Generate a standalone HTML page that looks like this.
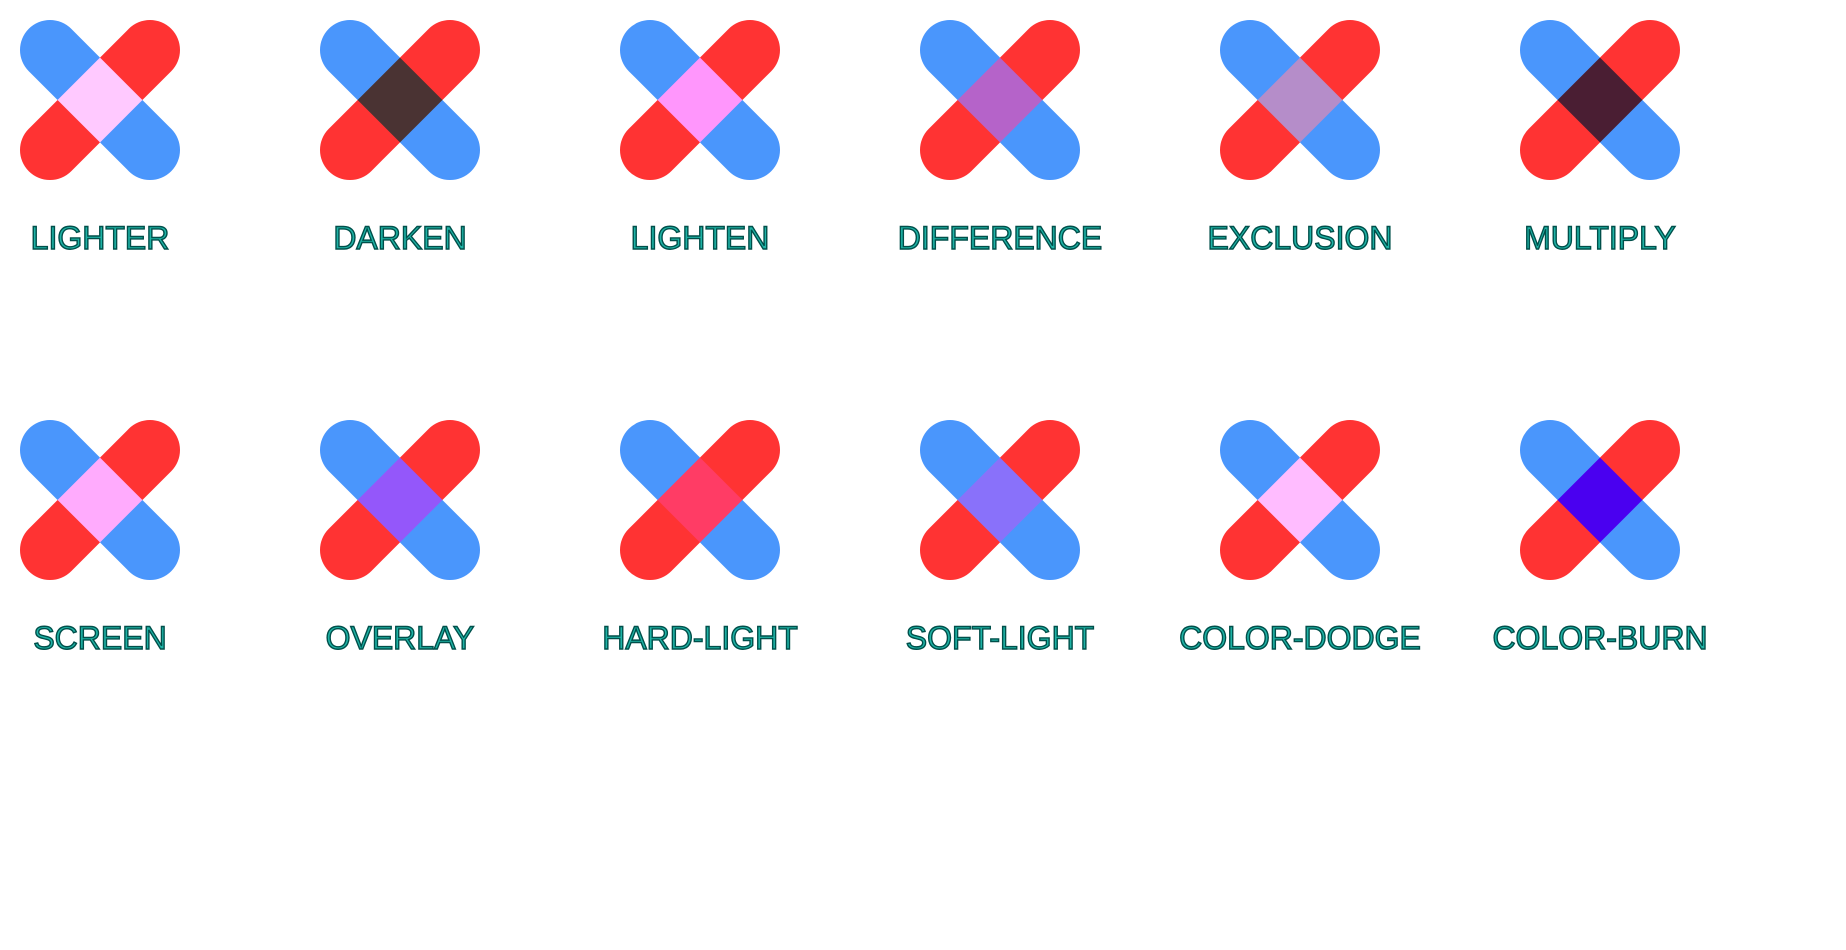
<!DOCTYPE html>
<html><head><meta charset="utf-8"><style>
html,body{margin:0;padding:0;background:#fff;width:1846px;height:950px;overflow:hidden}
svg{display:block}
text{font-family:"Liberation Sans",Arial,sans-serif;font-size:32px;fill:#1fb3a6;stroke:#004f4a;stroke-width:1.4px;text-anchor:middle}
.b{stroke:#4a96fc;stroke-width:60;stroke-linecap:round}
.r{stroke:#ff3333;stroke-width:60;stroke-linecap:round}
g.c{isolation:isolate}
</style></head><body>
<svg width="1846" height="950" xmlns="http://www.w3.org/2000/svg">
<defs>
<g id="bx"><line class="b" x1="50" y1="50" x2="150" y2="150"/></g>
</defs>
<g class="c" transform="translate(0,0)"><use href="#bx"/><line class="r" x1="150" y1="50" x2="50" y2="150" style="mix-blend-mode:plus-lighter"/></g>
<g class="c" transform="translate(300,0)"><use href="#bx"/><line class="r" x1="150" y1="50" x2="50" y2="150" style="mix-blend-mode:darken"/></g>
<g class="c" transform="translate(600,0)"><use href="#bx"/><line class="r" x1="150" y1="50" x2="50" y2="150" style="mix-blend-mode:lighten"/></g>
<g class="c" transform="translate(900,0)"><use href="#bx"/><line class="r" x1="150" y1="50" x2="50" y2="150" style="mix-blend-mode:difference"/></g>
<g class="c" transform="translate(1200,0)"><use href="#bx"/><line class="r" x1="150" y1="50" x2="50" y2="150" style="mix-blend-mode:exclusion"/></g>
<g class="c" transform="translate(1500,0)"><use href="#bx"/><line class="r" x1="150" y1="50" x2="50" y2="150" style="mix-blend-mode:multiply"/></g>
<g class="c" transform="translate(0,400)"><use href="#bx"/><line class="r" x1="150" y1="50" x2="50" y2="150" style="mix-blend-mode:screen"/></g>
<g class="c" transform="translate(300,400)"><use href="#bx"/><line class="r" x1="150" y1="50" x2="50" y2="150" style="mix-blend-mode:overlay"/></g>
<g class="c" transform="translate(600,400)"><use href="#bx"/><line class="r" x1="150" y1="50" x2="50" y2="150" style="mix-blend-mode:hard-light"/></g>
<g class="c" transform="translate(900,400)"><use href="#bx"/><line class="r" x1="150" y1="50" x2="50" y2="150" style="mix-blend-mode:soft-light"/></g>
<g class="c" transform="translate(1200,400)"><use href="#bx"/><line class="r" x1="150" y1="50" x2="50" y2="150" style="mix-blend-mode:color-dodge"/></g>
<g class="c" transform="translate(1500,400)"><use href="#bx"/><line class="r" x1="150" y1="50" x2="50" y2="150" style="mix-blend-mode:color-burn"/></g>
<text x="100" y="249">LIGHTER</text>
<text x="400" y="249">DARKEN</text>
<text x="700" y="249">LIGHTEN</text>
<text x="1000" y="249">DIFFERENCE</text>
<text x="1300" y="249">EXCLUSION</text>
<text x="1600" y="249">MULTIPLY</text>
<text x="100" y="649">SCREEN</text>
<text x="400" y="649">OVERLAY</text>
<text x="700" y="649">HARD-LIGHT</text>
<text x="1000" y="649">SOFT-LIGHT</text>
<text x="1300" y="649">COLOR-DODGE</text>
<text x="1600" y="649">COLOR-BURN</text>
</svg>
</body></html>
